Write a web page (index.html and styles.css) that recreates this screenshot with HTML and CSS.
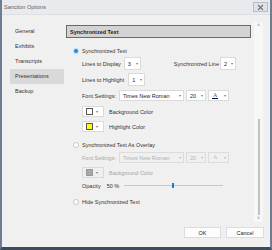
FILE: index.html
```html
<!DOCTYPE html>
<html>
<head>
<meta charset="utf-8">
<link rel="stylesheet" href="styles.css">
</head>
<body>
<div class="window">
  <div class="titlebar">
    <span class="title">Sanction Options</span>
    <span class="close"><svg width="7" height="7" viewBox="0 0 7 7"><path d="M1 1L6 6M6 1L1 6" stroke="#6b7583" stroke-width="1.2"/></svg></span>
  </div>
  <div class="main">
    <ul class="nav">
      <li>General</li>
      <li>Exhibits</li>
      <li>Transcripts</li>
      <li class="sel">Presentations</li>
      <li>Backup</li>
    </ul>
    <div class="content">
      <div class="panel">
        <div class="header">Synchronized Text</div>
        <div class="row r1 radio-row"><span class="radio on"></span><span>Synchronized Text</span></div>
        <div class="row r2 ind">
          <span>Lines to Display</span><span class="combo w17">3<i>▾</i></span>
          <span class="push">Synchronized Line</span><span class="combo w16">2<i>▾</i></span>
        </div>
        <div class="row r3 ind"><span>Lines to Highlight</span><span class="combo w17 ml4">1<i>▾</i></span></div>
        <div class="row r4 ind">
          <span>Font Settings:</span>
          <span class="combo w65">Times New Roman<i>▾</i></span>
          <span class="combo w20">20<i>▾</i></span>
          <span class="combo w21 color"><b class="a">A</b><i>▾</i></span>
        </div>
        <div class="row r5 ind"><span class="swbtn"><span class="sw white"></span><i>▾</i></span><span class="swlabel">Background Color</span></div>
        <div class="row r6 ind"><span class="swbtn"><span class="sw yellow"></span><i>▾</i></span><span class="swlabel">Highlight Color</span></div>
        <div class="row r7 radio-row"><span class="radio"></span><span>Synchronized Text As Overlay</span></div>
        <div class="row r8 ind dis">
          <span>Font Settings:</span>
          <span class="combo w65">Times New Roman<i>▾</i></span>
          <span class="combo w20">20<i>▾</i></span>
          <span class="combo w21 color"><b class="a">A</b><i>▾</i></span>
        </div>
        <div class="row r9 ind dis"><span class="swbtn"><span class="sw gray"></span><i>▾</i></span><span class="swlabel">Background Color</span></div>
        <div class="row r10 ind">
          <span>Opacity</span><span class="pct">50 %</span>
          <span class="slider"><span class="thumb"></span></span>
        </div>
        <div class="row r11 radio-row"><span class="radio"></span><span>Hide Synchronized Text</span></div>
      </div>
      <div class="scroll">
        <span class="arr">˄</span>
        <span class="track"><span class="sthumb"></span></span>
        <span class="arr">˅</span>
      </div>
    </div>
  </div>
  <div class="footer">
    <span class="btn">OK</span>
    <span class="btn">Cancel</span>
  </div>
</div>
</body>
</html>
```

FILE: styles.css
```css
* { box-sizing: border-box; }
body {
  margin: 0;
  width: 272px;
  height: 250px;
  font-family: "Liberation Sans", Arial, sans-serif;
  font-size: 5.5px;
  color: #333;
  background: #f0f0f0;
}
.window {
  width: 272px;
  height: 250px;
  display: flex;
  flex-direction: column;
  border-left: 2px solid #6e7e90;
  border-right: 2px solid #6e7e90;
  border-bottom: 3px solid #3c4b5d;
  background: #f0f0f0;
}
.titlebar {
  height: 15px;
  flex: none;
  display: flex;
  align-items: center;
  justify-content: space-between;
  background: #e9eaed;
  border-bottom: 1px solid #dedfe3;
  padding: 0 2px 0 2px;
}
.title { color: #606060; }
.close {
  width: 15px;
  height: 10px;
  display: flex;
  align-items: center;
  justify-content: center;
  background: #dfe2e8;
  border: 1px solid #b8bec8;
}
.main {
  flex: none;
  height: 206px;
  display: flex;
}
.nav {
  list-style: none;
  margin: 0;
  padding: 9px 0 0 8px;
  width: 62px;
  flex: none;
}
.nav li {
  height: 15px;
  line-height: 15px;
  padding-left: 5px;
  color: #333;
}
.nav li.sel { background: #d9d9d9; }
.content {
  flex: 1;
  display: flex;
  padding: 7px 0 0 2px;
}
.panel {
  width: 185px;
  padding-top: 3px;
}
.header {
  height: 13px;
  border: 1px solid #6a6a6a;
  background: #d3d3d3;
  font-weight: bold;
  color: #222;
  padding-left: 3px;
  display: flex;
  align-items: center;
}
.row {
  height: 13px;
  display: flex;
  align-items: center;
  padding-right: 15px;
}
.radio-row { padding-left: 7px; }
.ind { padding-left: 16px; }
.r1 { margin-top: 6px; }
.r2 { margin-top: 0; }
.r3 { margin-top: 3px; }
.r4 { margin-top: 3px; }
.r5 { margin-top: 3px; }
.r6 { margin-top: 2px; }
.r7 { margin-top: 5px; }
.r8 { margin-top: 0; }
.r9 { margin-top: 2px; }
.r10 { margin-top: 0; }
.r11 { margin-top: 3px; }
.radio {
  width: 6px;
  height: 6px;
  border-radius: 50%;
  border: 1px solid #c9c9c9;
  background: #fff;
  margin-right: 3px;
  flex: none;
}
.radio.on {
  border: 1px solid #cfe3f5;
  background: #1a8ce6;
}
.combo {
  height: 13px;
  background: #fff;
  border: 1px solid #dadada;
  margin-left: 3px;
  display: flex;
  align-items: center;
  justify-content: space-between;
  padding: 0 2px 0 3px;
  color: #222;
  flex: none;
}
.combo i {
  font-style: normal;
  font-size: 4px;
  color: #777;
}
.r4 .combo, .r8 .combo { height: 11px; }
.ml4 { margin-left: 4px; }
.w17 { width: 17px; }
.w16 { width: 16px; margin-left: 1px; }
.w65 { width: 65px; }
.w20 { width: 20px; margin-left: 2px; }
.w21 { width: 21px; margin-left: 2px; }
.push { margin-left: auto; }
.color .a {
  font-family: "Liberation Serif", serif;
  font-weight: normal;
  color: #3a5fb0;
  font-size: 6px;
  border-bottom: 1.5px solid #111;
  line-height: 6px;
  padding: 0 1px;
}
.swbtn {
  width: 22px;
  height: 11px;
  background: #fff;
  border: 1px solid #dadada;
  display: flex;
  align-items: center;
  padding-left: 3px;
  gap: 3px;
  flex: none;
}
.swbtn i { font-style: normal; font-size: 4px; color: #777; }
.sw {
  width: 7px;
  height: 7px;
  border: 1px solid #555;
}
.sw.white { background: #fff; }
.sw.yellow { background: #ffff00; }
.sw.gray { background: #a8a8a8; border-color: #999; }
.swlabel { margin-left: 5px; }
.dis { color: #a6a6a6; }
.dis .combo { background: #f0f0f0; border-color: #dcdcdc; color: #b0b0b0; }
.dis .combo i { color: #b8b8b8; }
.dis .color .a { color: #b8c2d8; border-bottom-color: #f0f0f0; }
.dis .swbtn { background: #f0f0f0; }
.pct { margin-left: 6px; }
.slider {
  margin-left: 5px;
  width: 99px;
  height: 1px;
  background: #c8c8c8;
  position: relative;
}
.thumb {
  position: absolute;
  left: 48px;
  top: -2px;
  width: 2px;
  height: 5px;
  background: #1a7bd4;
}
.scroll {
  margin-left: 3px;
  width: 9px;
  height: 200px;
  background: #f7f7f7;
  display: flex;
  flex-direction: column;
  align-items: center;
  font-size: 5px;
  color: #777;
}
.arr { height: 7px; line-height: 7px; }
.track {
  flex: 1;
  display: flex;
  flex-direction: column;
  justify-content: flex-end;
}
.sthumb {
  width: 2px;
  height: 96px;
  background: #c2c2c2;
}
.footer {
  flex: 1;
  display: flex;
  justify-content: flex-end;
  align-items: flex-start;
  padding: 6px 6px 0 0;
  gap: 5px;
}
.btn {
  width: 37px;
  height: 11px;
  background: #fdfdfd;
  border: 1px solid #dcdcdc;
  display: flex;
  align-items: center;
  justify-content: center;
  color: #222;
}
.btn + .btn { width: 38px; }
```
